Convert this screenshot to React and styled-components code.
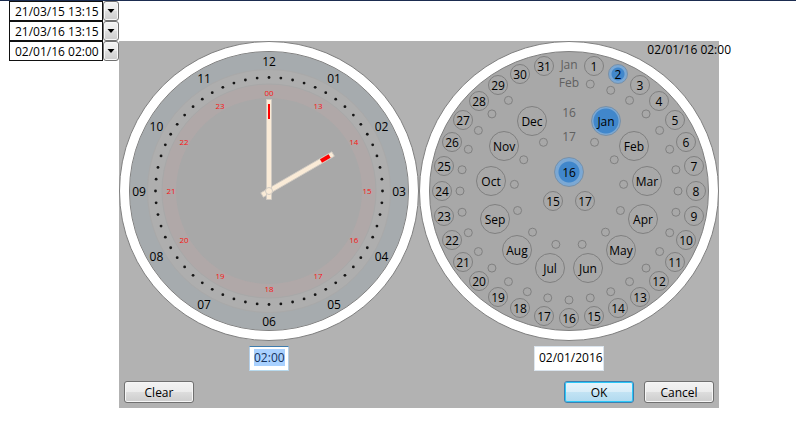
import React, { useEffect, useRef, useState } from "react";
import styled, { createGlobalStyle, css } from "styled-components";

const GlobalStyle = createGlobalStyle`
  * { box-sizing: border-box; }
  body {
    margin: 0;
    background: #fff;
    color: #000;
    font-family: "Open Sans", "Noto Sans", sans-serif;
    font-size: 12px;
    line-height: 16px;
  }
  button, input { font: inherit; color: inherit; }
`;

const Page = styled.main`
  min-height: 100vh;
  border-top: 1px solid #1b2c50;
  padding-left: 9px;
`;

const Picker = styled.div`
  position: relative;
  display: flex;
  width: max-content;
`;

const PickerInput = styled.input`
  width: 94px;
  height: 20px;
  padding: 0 0 0 5px;
  border: 1px solid #111;
  background: #fff;
  outline: none;
`;

const DropButton = styled.button`
  display: flex;
  align-items: center;
  justify-content: center;
  width: 16px;
  height: 20px;
  padding: 0;
  border: 1px solid #707070;
  border-radius: 3px;
  background: linear-gradient(#f3f3f3 0%, #ebebeb 50%, #dddddd 50%, #cdcdcd 100%);
  box-shadow: inset 0 0 0 1px #f8f8f8;
`;

const Popup = styled.section`
  position: absolute;
  left: 100%;
  top: 0;
  background: #b2b2b2;
`;

const Dials = styled.div`
  display: flex;
`;

const DialColumn = styled.div`
  display: flex;
  flex-direction: column;
  align-items: center;
  gap: 5px;
`;

const Dial = styled.div`
  position: relative;
  width: 300px;
  height: 300px;
`;

const DialArt = styled.svg`
  display: block;
  width: 100%;
  height: 100%;
`;

const HourText = styled.text`
  font-size: 12px;
  text-anchor: middle;
`;

const NightText = styled.text`
  font-size: 8px;
  text-anchor: middle;
  fill: #f81414;
`;

const HintText = styled.text`
  font-size: 12px;
  text-anchor: middle;
  fill: #606060;
`;

const Disc = styled.button`
  position: absolute;
  display: flex;
  align-items: center;
  justify-content: center;
  width: ${(p) => p.$size}px;
  height: ${(p) => p.$size}px;
  padding: 1px 0 0;
  border: 1px solid #808080;
  border-radius: 50%;
  background: transparent;
  white-space: nowrap;
  ${(p) =>
    p.$core &&
    css`
      border-color: #7790a8;
      background: radial-gradient(circle, #4187cb ${p.$core - 1}px, #7ba8d4 ${p.$core}px);
    `}
`;

const ValueInput = styled.input`
  width: ${(p) => p.$width}px;
  height: 25px;
  padding: 0 0 2px 4px;
  border: 1px solid #dbe5ee;
  background: #fff;
  outline: none;
  &:focus {
    border-color: #3d7bad #b5cfe7 #b7d9ed #b5cfe7;
  }
  &::selection {
    background: #a9d1ff;
    color: #16325c;
  }
`;

const Actions = styled.div`
  display: flex;
  gap: 10px;
  padding: 10px 5px 5px;
`;

const ActionButton = styled.button`
  width: 70px;
  height: 22px;
  padding: 2px 0 0;
  border: 1px solid ${(p) => (p.$primary ? "#3c7fb1" : "#707070")};
  border-radius: 3px;
  background: ${(p) =>
    p.$primary
      ? "linear-gradient(#e8f4fb 0%, #d8edf8 50%, #c2e3f4 50%, #b0d9ef 100%)"
      : "linear-gradient(#f3f3f3 0%, #ebebeb 50%, #dddddd 50%, #cdcdcd 100%)"};
  box-shadow: inset 0 0 0 1px ${(p) => (p.$primary ? "#2cc8f8" : "#f6f6f6")};
  ${(p) => p.$pushRight && "margin-left: auto;"}
`;

const Summary = styled.output`
  position: absolute;
  right: -12px;
  top: 1px;
  white-space: nowrap;
`;

const CENTER = 150;
const MONTHS = ["Jan", "Feb", "Mar", "Apr", "May", "Jun", "Jul", "Aug", "Sep", "Oct", "Nov", "Dec"];
const range = (n) => Array.from({ length: n }, (_, i) => i);
const pad = (n) => String(n).padStart(2, "0");

function polar(radius, slot, slots) {
  const angle = (2 * Math.PI * slot) / slots;
  return { x: CENTER + radius * Math.sin(angle), y: CENTER - radius * Math.cos(angle) };
}

function DialDisc({ label, radius, slot, slots, size, core, onClick }) {
  const { x, y } = polar(radius, slot, slots);
  const place = { left: Math.round(x - size / 2), top: Math.round(y - size / 2) };
  return (
    <Disc type="button" $size={size} $core={core} style={place} aria-pressed={!!core} onClick={onClick}>
      {label}
    </Disc>
  );
}

function DialFace() {
  return (
    <>
      <circle cx="150" cy="150" r="149.5" fill="#fff" stroke="#808080" />
      <circle cx="150" cy="150" r="139.5" fill="#a8a8a8" stroke="#808080" />
    </>
  );
}

function ClockDial() {
  return (
    <Dial>
      <DialArt viewBox="0 0 300 300" role="img" aria-label="Clock">
        <DialFace />
        <circle cx="150" cy="150" r="130" fill="none" stroke="#a6abae" strokeWidth="18" />
        <circle cx="150" cy="150" r="114" fill="none" stroke="#aeaeae" strokeWidth="15" />
        <circle cx="150" cy="150" r="121.5" fill="none" stroke="#a9a9a9" />
        <circle cx="150" cy="150" r="100" fill="none" stroke="#b0a8a8" strokeWidth="14" />
        <circle cx="150" cy="150" r="107" fill="none" stroke="#a8a8a8" />
        {range(60).map((i) => {
          const { x, y } = polar(113.5, i, 60);
          return <circle key={i} cx={x} cy={y} r="1.4" fill="#151515" />;
        })}
        {range(12).map((i) => {
          const outer = polar(130, i, 12);
          const inner = polar(98, i, 12);
          return (
            <g key={i}>
              <HourText x={outer.x} y={outer.y + 5}>{pad(i || 12)}</HourText>
              <NightText x={inner.x} y={inner.y + 3}>{i ? i + 12 : "00"}</NightText>
            </g>
          );
        })}
        <g transform="rotate(60 150 150)">
          <rect x="147.5" y="76" width="5" height="82" fill="#faebd7" stroke="#d0cac2" strokeWidth="0.8" />
          <rect x="148" y="80" width="4" height="10" fill="#f00" />
        </g>
        <rect x="147.5" y="58.5" width="5" height="100" fill="#faebd7" stroke="#d0cac2" strokeWidth="0.8" />
        <rect x="149" y="63" width="2" height="15" fill="#f00" />
        <circle cx="150" cy="150" r="3.5" fill="#faebd7" stroke="#d0cac2" />
      </DialArt>
    </Dial>
  );
}

function CalendarDial() {
  const [day, setDay] = useState(2);
  const [month, setMonth] = useState(0);
  return (
    <Dial>
      <DialArt viewBox="0 0 300 300" aria-hidden="true">
        <DialFace />
        <g fill="none" stroke="#808080">
          {range(29).map((i) => {
            const { x, y } = polar(109, i + 1, 32);
            return <circle key={i} cx={x} cy={y} r="4" />;
          })}
          {range(12).map((i) => {
            const { x, y } = polar(55, i + 1, 13);
            return <circle key={i} cx={x} cy={y} r="4" />;
          })}
        </g>
        <HintText x="150" y="28">Jan</HintText>
        <HintText x="150" y="46">Feb</HintText>
        <HintText x="150" y="76">16</HintText>
        <HintText x="150" y="100">17</HintText>
      </DialArt>
      {range(31).map((i) => (
        <DialDisc
          key={i}
          label={i + 1}
          radius={127}
          slot={i + 1}
          slots={32}
          size={20}
          core={day === i + 1 ? 7 : 0}
          onClick={() => setDay(i + 1)}
        />
      ))}
      {MONTHS.map((name, i) => (
        <DialDisc
          key={name}
          label={name}
          radius={79}
          slot={i + 1}
          slots={13}
          size={30}
          core={month === i ? 13 : 0}
          onClick={() => setMonth(i)}
        />
      ))}
      <DialDisc label="16" radius={19} slot={0} slots={3} size={30} core={11} />
      <DialDisc label="17" radius={19} slot={1} slots={3} size={20} />
      <DialDisc label="15" radius={19} slot={2} slots={3} size={20} />
    </Dial>
  );
}

function DateTimePopup() {
  const timeRef = useRef(null);
  useEffect(() => {
    timeRef.current.focus();
    timeRef.current.select();
  }, []);
  return (
    <Popup>
      <Dials>
        <DialColumn>
          <ClockDial />
          <ValueInput ref={timeRef} $width={40} aria-label="Time" defaultValue="02:00" />
        </DialColumn>
        <DialColumn>
          <CalendarDial />
          <ValueInput $width={70} aria-label="Date" defaultValue="02/01/2016" />
        </DialColumn>
      </Dials>
      <Actions>
        <ActionButton type="button">Clear</ActionButton>
        <ActionButton type="button" $primary $pushRight>OK</ActionButton>
        <ActionButton type="button">Cancel</ActionButton>
      </Actions>
      <Summary>02/01/16 02:00</Summary>
    </Popup>
  );
}

function DateTimePicker({ value, open }) {
  return (
    <Picker>
      <PickerInput aria-label="Date and time" defaultValue={value} />
      <DropButton type="button" aria-label="Open picker" aria-expanded={!!open}>
        <svg width="8" height="4" viewBox="0 0 8 4" aria-hidden="true">
          <path d="M0.5 0H7.5L4 4Z" fill="#000" />
        </svg>
      </DropButton>
      {open && <DateTimePopup />}
    </Picker>
  );
}

export default function App() {
  return (
    <>
      <GlobalStyle />
      <Page>
        <DateTimePicker value="21/03/15 13:15" />
        <DateTimePicker value="21/03/16 13:15" />
        <DateTimePicker value="02/01/16 02:00" open />
      </Page>
    </>
  );
}
